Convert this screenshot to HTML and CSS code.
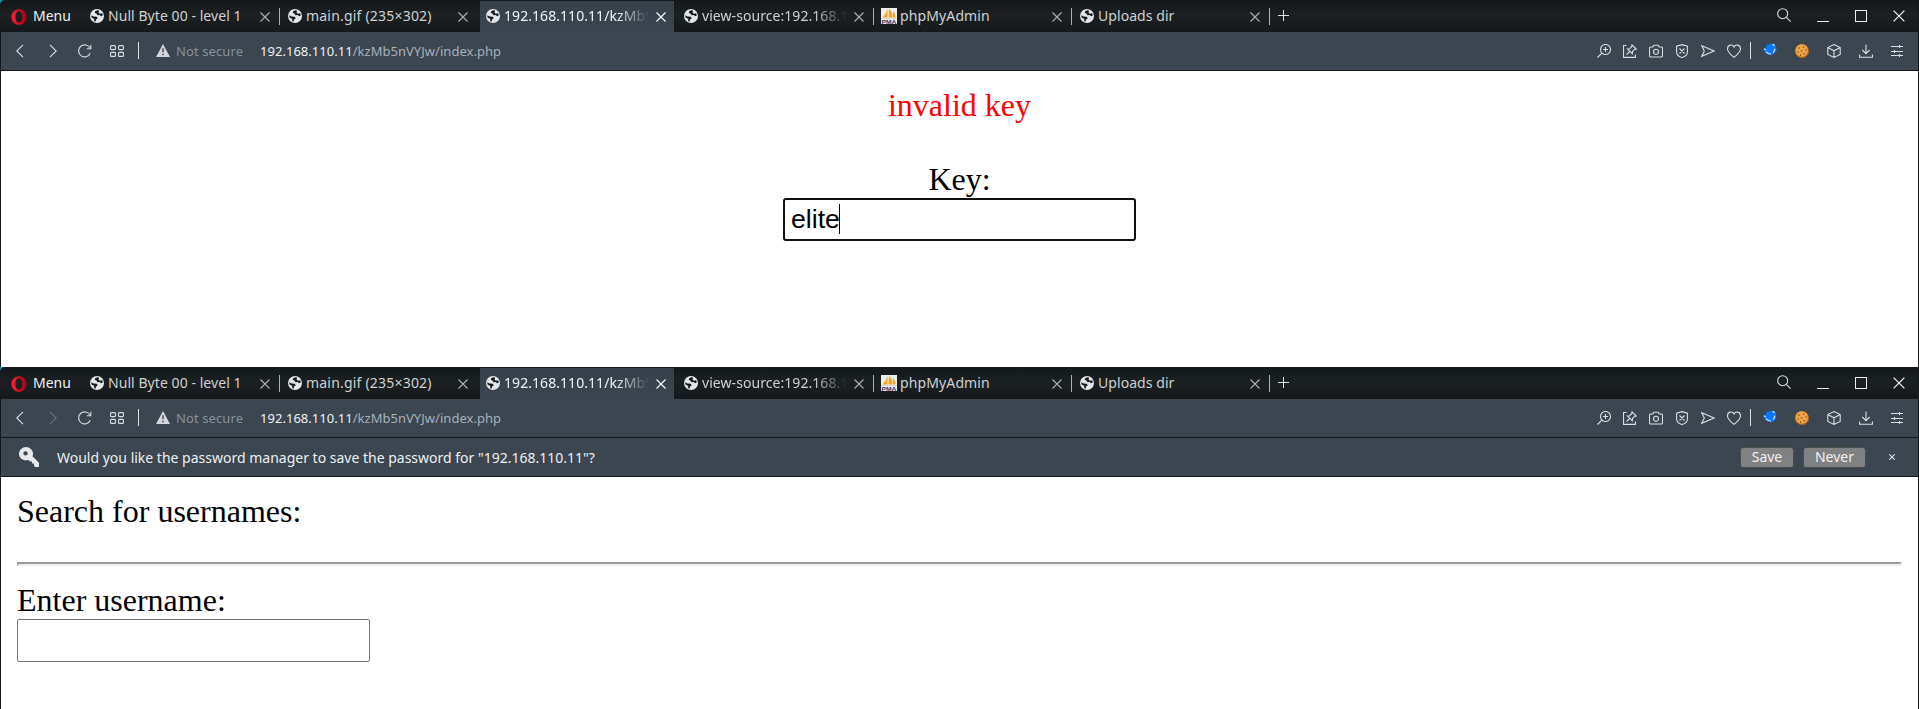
FILE: index.html
```html
<!DOCTYPE html>
<html lang="en">
<head>
<meta charset="utf-8">
<title>index.php</title>
<link rel="stylesheet" href="styles.css">
</head>
<body>
<svg class="defs" width="0" height="0" aria-hidden="true">
  <linearGradient id="red" x1="0" x2="1"><stop offset="0" stop-color="#ff2035"/><stop offset="1" stop-color="#a50012"/></linearGradient>
  <symbol id="opera" viewBox="0 0 16 16"><path fill="url(#red)" fill-rule="evenodd" d="M8 .2C12.3.2 15.6 3.8 15.6 8S12.300 15.800 8 15.800.4 12.200.4 8 3.700.2 8 .2zM8 2.300C5.600 2.300 4.600 5 4.600 8S5.600 13.700 8 13.700 11.400 11 11.400 8 10.400 2.300 8 2.300z"/></symbol>
  <symbol id="globe" viewBox="0 0 14 14"><circle cx="7" cy="7" r="7" fill="#e3e6e9"/><path fill="#15191c" d="M7.400 1.200 5.200 2.200 4.800 3.800 6.600 4.800 7.600 6.300 9.800 6 11 7.300 12.700 6.600 12.300 4.300 9.700 4.700 8.600 3.600 9 1.500zM1.200 6.300 3.500 7.600 6.700 7.800 7.800 9.200 6 10.500 5.700 12.600 4.100 12.200 4.300 10 1.600 8.400z"/></symbol>
  <symbol id="pma" viewBox="0 0 16 16"><path fill="#eee" d="M0 0h16v16H0z"/><path fill="#f8a31c" d="M6.500 1v8.500H1.500Q5 6 6.500 1zM8 1q4 3 3.500 8.500H7.500zM12 3q3 3 2.500 6.500H12z"/><path fill="#d5d5d8" d="M0 10h16v1H0z"/><text x="0.5" y="15.700" font-family="Liberation Sans" font-weight="bold" font-size="6" textLength="15" lengthAdjust="spacingAndGlyphs" fill="#34366f">PMA</text></symbol>
  <symbol id="x" viewBox="0 0 10 10"><path d="M.5.5l9 9M9.500.5l-9 9"/></symbol>
  <symbol id="back" viewBox="0 0 8 14"><path d="M7 .8.8 7 7 13.200"/></symbol>
  <symbol id="fwd" viewBox="0 0 8 14"><path d="M1 .8 7.200 7 1 13.200"/></symbol>
  <symbol id="reload" viewBox="0 0 14 14"><path d="M12.200 9.200A6 6 0 1 1 11.800 3.800M12.800.8V4.800H8.800"/></symbol>
  <symbol id="grid" viewBox="0 0 14 12"><path d="M1.500.6h3a1 1 0 0 1 1 1v2a1 1 0 0 1-1 1h-3a1 1 0 0 1-1-1v-2a1 1 0 0 1 1-1zM9.500.6h3a1 1 0 0 1 1 1v2a1 1 0 0 1-1 1h-3a1 1 0 0 1-1-1v-2a1 1 0 0 1 1-1zM1.500 7.400h3a1 1 0 0 1 1 1v2a1 1 0 0 1-1 1h-3a1 1 0 0 1-1-1v-2a1 1 0 0 1 1-1zM9.500 7.400h3a1 1 0 0 1 1 1v2a1 1 0 0 1-1 1h-3a1 1 0 0 1-1-1v-2a1 1 0 0 1 1-1z"/></symbol>
  <symbol id="warn" viewBox="0 0 14 13"><path fill="#d4d7da" stroke="none" d="M7 0 14 13H0z"/><path stroke="#3b4650" stroke-width="1.400" d="M7 4.200v4M7 9.800v1.500"/></symbol>
  <symbol id="mag" viewBox="0 0 14 14"><circle cx="5.700" cy="5.700" r="5"/><path d="M9.300 9.300l4.300 4.300"/></symbol>
  <symbol id="zoomin" viewBox="0 0 14 14"><circle cx="8.500" cy="5.500" r="5"/><path d="M4.900 9.100.5 13.500M8.500 3v5M6 5.500h5"/></symbol>
  <symbol id="pin" viewBox="0 0 14 14"><path d="M3.500 1.500h-3v11.900h11.900v-3M9 .8l4.200 4.200-1.500.2-2.200 2.300-.2 2.300L4.400 5l2.400-.3 2-2.300zM6.700 7.500 3.500 10.700"/></symbol>
  <symbol id="camera" viewBox="0 0 14 14"><path d="M1.500 3h2.300L4.800 1.200h4.400L10.200 3h2.300a1 1 0 0 1 1 1v8a1 1 0 0 1-1 1h-11a1 1 0 0 1-1-1V4a1 1 0 0 1 1-1z"/><circle cx="7" cy="7.700" r="2.500"/></symbol>
  <symbol id="shield" viewBox="0 0 12 14"><path d="M6 .6 11.400 2.200V8Q11.400 12 6 13.500.6 12 .6 8V2.200zM3.500 4.500l5 5M8.500 4.500l-5 5"/></symbol>
  <symbol id="send" viewBox="0 0 14 12"><path d="M.8.8 13 6 .8 11.200 3.300 6z"/></symbol>
  <symbol id="heart" viewBox="0 0 14 14"><path d="M7 2.900C5.700.2.5.1.5 5c0 3.300 3.400 5.700 6.500 8.400C10.100 10.700 13.500 8.300 13.500 5c0-4.900-5.200-4.800-6.500-2.100z"/></symbol>
  <symbol id="whale" viewBox="0 0 14 14"><path fill="#0877f9" stroke="none" d="M3.500 1.800 9 .8 10.500 1.600 12 .5 11.800 2.500Q14 4 13.300 7.500 12 12 7.500 12 4 12 2 9.500L.3 6.500 2.700 5z"/><path stroke="#d5eaff" d="M.8 5.800 3 6.700M3 8.700q2.500 2.800 5 2.200M10 9.600q1.800-1.500 1.800-3.800M9.500 1.300l2.300 1.500"/></symbol>
  <symbol id="cookie" viewBox="0 0 14 14"><circle cx="7" cy="7" r="7" fill="#bd6b18" stroke="none"/><circle cx="6.700" cy="6.500" r="6.200" fill="#eda64a" stroke="none"/><path stroke="#70400f" stroke-width="1.300" stroke-linecap="round" d="M4 4h.1M8.500 3h.1M11 6h.1M3 8h.1M6.500 7h.1M9 9.500h.1M5.500 11h.1"/></symbol>
  <symbol id="cube" viewBox="0 0 14 14"><path d="M7 .6 13.200 3.600v6.800L7 13.400.8 10.400V3.600zM.8 3.600 7 6.800l6.200-3.200M7 6.800v6.600"/></symbol>
  <symbol id="down" viewBox="0 0 14 14"><path d="M7 .5v9M3.300 6 7 9.700 10.700 6M.6 10.500v2.700h12.800v-2.700"/></symbol>
  <symbol id="sliders" viewBox="0 0 12 12"><path d="M0 1.500h12M0 6.500h12M0 10.500h12M8.500 0v3M3.500 5v3M8.500 9v3"/></symbol>
  <symbol id="key" viewBox="0 0 20 20"><path fill="#e6e9ee" fill-rule="evenodd" stroke="none" d="M7 0C10.700 0 14 3 14 6.700c0 1-.2 1.900-.5 2.600L20 15.800V20h-4l-1-1.500v-2h-2v-2h-2l-1.500-1.600C4.500 14.500 0 11 0 7 0 3 3.300 0 7 0zM6.500 4.200a2.200 2.200 0 1 0 .1 0z"/></symbol>
</svg>

<section class="window first">
  <div class="tabs">
    <div class="menu"><svg class="i16"><use href="#opera"/></svg><span>Menu</span></div>
    <div class="tab sep"><svg class="fav"><use href="#globe"/></svg><span class="t">Null Byte 00 - level 1</span><svg class="close"><use href="#x"/></svg></div>
    <div class="tab"><svg class="fav"><use href="#globe"/></svg><span class="t wide">main.gif (235×302)</span><svg class="close"><use href="#x"/></svg></div>
    <div class="tab active"><svg class="fav"><use href="#globe"/></svg><span class="t fade">192.168.110.11/kzMb5</span><svg class="close"><use href="#x"/></svg></div>
    <div class="tab sep"><svg class="fav"><use href="#globe"/></svg><span class="t fade">view-source:192.168.1</span><svg class="close"><use href="#x"/></svg></div>
    <div class="tab sep pma"><svg class="fav"><use href="#pma"/></svg><span class="t">phpMyAdmin</span><svg class="close"><use href="#x"/></svg></div>
    <div class="tab sep"><svg class="fav"><use href="#globe"/></svg><span class="t">Uploads dir</span><svg class="close"><use href="#x"/></svg></div>
    <i class="plus"></i>
    <div class="controls"><svg class="i14 search"><use href="#mag"/></svg><i class="min"></i><i class="max"></i><svg class="quit"><use href="#x"/></svg></div>
  </div>
  <div class="toolbar">
    <div class="nav"><svg class="arrow"><use href="#back"/></svg><svg class="arrow"><use href="#fwd"/></svg><svg class="i14 reload"><use href="#reload"/></svg><svg class="grid"><use href="#grid"/></svg><i class="bar"></i></div>
    <svg class="warn"><use href="#warn"/></svg><span class="insecure">Not secure</span><span class="url"><b>192.168.110.11</b>/kzMb5nVYJw/index.php</span>
    <div class="tools"><svg class="i14"><use href="#zoomin"/></svg><svg class="i14"><use href="#pin"/></svg><svg class="i14"><use href="#camera"/></svg><svg class="i14"><use href="#shield"/></svg><svg class="i14"><use href="#send"/></svg><svg class="i14"><use href="#heart"/></svg></div><i class="bar"></i>
    <div class="exts"><svg class="i14 whale"><use href="#whale"/></svg><svg class="i14"><use href="#cookie"/></svg><svg class="i14"><use href="#cube"/></svg><svg class="i14"><use href="#down"/></svg><svg class="i12"><use href="#sliders"/></svg></div>
  </div>
  <main class="page centered">
    <p class="invalid">invalid key</p>
    <form><label>Key:</label><div class="field focused"><span>elite</span><i class="caret"></i></div></form>
  </main>
</section>

<section class="window second">
  <div class="tabs">
    <div class="menu"><svg class="i16"><use href="#opera"/></svg><span>Menu</span></div>
    <div class="tab sep"><svg class="fav"><use href="#globe"/></svg><span class="t">Null Byte 00 - level 1</span><svg class="close"><use href="#x"/></svg></div>
    <div class="tab"><svg class="fav"><use href="#globe"/></svg><span class="t wide">main.gif (235×302)</span><svg class="close"><use href="#x"/></svg></div>
    <div class="tab active"><svg class="fav"><use href="#globe"/></svg><span class="t fade">192.168.110.11/kzMb5</span><svg class="close"><use href="#x"/></svg></div>
    <div class="tab sep"><svg class="fav"><use href="#globe"/></svg><span class="t fade">view-source:192.168.1</span><svg class="close"><use href="#x"/></svg></div>
    <div class="tab sep pma"><svg class="fav"><use href="#pma"/></svg><span class="t">phpMyAdmin</span><svg class="close"><use href="#x"/></svg></div>
    <div class="tab sep"><svg class="fav"><use href="#globe"/></svg><span class="t">Uploads dir</span><svg class="close"><use href="#x"/></svg></div>
    <i class="plus"></i>
    <div class="controls"><svg class="i14 search"><use href="#mag"/></svg><i class="min"></i><i class="max"></i><svg class="quit"><use href="#x"/></svg></div>
  </div>
  <div class="toolbar">
    <div class="nav"><svg class="arrow"><use href="#back"/></svg><svg class="arrow disabled"><use href="#fwd"/></svg><svg class="i14 reload"><use href="#reload"/></svg><svg class="grid"><use href="#grid"/></svg><i class="bar"></i></div>
    <svg class="warn"><use href="#warn"/></svg><span class="insecure">Not secure</span><span class="url"><b>192.168.110.11</b>/kzMb5nVYJw/index.php</span>
    <div class="tools"><svg class="i14"><use href="#zoomin"/></svg><svg class="i14"><use href="#pin"/></svg><svg class="i14"><use href="#camera"/></svg><svg class="i14"><use href="#shield"/></svg><svg class="i14"><use href="#send"/></svg><svg class="i14"><use href="#heart"/></svg></div><i class="bar"></i>
    <div class="exts"><svg class="i14 whale"><use href="#whale"/></svg><svg class="i14"><use href="#cookie"/></svg><svg class="i14"><use href="#cube"/></svg><svg class="i14"><use href="#down"/></svg><svg class="i12"><use href="#sliders"/></svg></div>
  </div>
  <div class="infobar"><svg class="key"><use href="#key"/></svg><span class="ask">Would you like the password manager to save the password for "192.168.110.11"?</span><button class="save">Save</button><button class="never">Never</button><svg class="dismiss"><use href="#x"/></svg></div>
  <main class="page">
    <p class="heading">Search for usernames:</p>
    <hr>
    <form><label>Enter username:</label><div class="field"></div></form>
  </main>
</section>
</body>
</html>
```
FILE: styles.css
```css
* { box-sizing: border-box; }
body { margin: 0; width: 1919px; height: 709px; overflow: hidden; background: #fff; font-family: "Noto Sans", sans-serif; }
svg { display: block; flex: none; fill: none; stroke: #d9dee2; stroke-width: 1.1; }
.defs { position: absolute; }
i { display: block; flex: none; }
.window { border: solid #14171c; border-width: 0 1px; background: #fff; position: relative; }
.window::before { content: ""; position: absolute; left: -1px; top: 0; width: 4px; height: 4px; background: #1a8fa3; }
.first { height: 367px; }
.second { height: 342px; }
.tabs { height: 32px; margin-left: -1px; position: relative; display: flex; align-items: center; background: linear-gradient(#14181b, #1b2023 45%, #15191c); color: #cfd1d2; font-size: 14px; line-height: 20px; border-top-left-radius: 5px; }
.menu { width: 84px; padding: 1px 0 0 11px; display: flex; align-items: center; gap: 6px; color: #eef0f1; }
.menu span { margin-top: -1px; }
.i16 { width: 16px; height: 16px; stroke: none; }
.i14 { width: 14px; height: 14px; }
.i12 { width: 12px; height: 12px; }
.tab { width: 194px; height: 32px; margin-right: 4px; padding: 0 8.5px 0 6px; display: flex; align-items: center; position: relative; }
.tab .t { width: 144px; margin-left: 4px; white-space: nowrap; letter-spacing: .06px; }
.tab .wide { letter-spacing: .2px; }
.fav { width: 14px; height: 14px; stroke: none; }
.pma { padding-left: 5px; }
.pma .fav { width: 16px; height: 16px; }
.pma .t { margin-left: 3px; letter-spacing: .12px; }
.close { width: 10px; height: 10px; margin: 1px 0 0 auto; stroke: #aeb1b3; }
.active { background: linear-gradient(#35404a, #3b4650) 0 1px no-repeat; color: #f2f4f5; }
.active .close { stroke: #fff; }
.fade { -webkit-mask-image: linear-gradient(90deg, #000 78%, transparent 101%); mask-image: linear-gradient(90deg, #000 78%, transparent 101%); }
.sep::after { content: ""; position: absolute; left: 195px; top: 8px; width: 1px; height: 17px; background: #a9b2b9; }
.plus { width: 11px; height: 11px; margin: -1px 0 0 6px; background: linear-gradient(#dde, #dde) 5px 0 / 1px 11px no-repeat, linear-gradient(#dde, #dde) 0 5px / 11px 1px no-repeat; }
.controls { margin-left: auto; padding-right: 13px; display: flex; align-items: center; stroke: #fff; }
.search { margin: -2px 26px 0 0; }
.min { width: 12px; height: 1px; margin: 11px 26px 0 0; background: #eee; }
.max { width: 12px; height: 12px; margin-right: 26px; border: 1px solid #eee; }
.quit { width: 12px; height: 12px; stroke: #eee; }
.toolbar { height: 39px; padding: 0 15px 1px; border-bottom: 1px solid #14171c; background: #3b4650; display: flex; align-items: center; }
.nav { display: flex; align-items: center; }
.arrow { width: 8px; height: 14px; margin-right: 25px; }
.disabled { opacity: .3; }
.reload { margin: 0 18px 0 -4px; }
.grid { width: 14px; height: 12px; margin-right: 14px; }
.bar { width: 1px; height: 17px; background: #dde1e4; }
.warn { width: 14px; height: 13px; margin-left: 17px; }
.insecure { width: 84px; margin-left: 6px; color: #87929b; font-size: 13px; white-space: nowrap; letter-spacing: .1px; }
.url { color: #a7b1ba; font-size: 13px; white-space: nowrap; letter-spacing: .03px; }
.url b { font-weight: normal; color: #eff2f4; }
.tools { display: flex; align-items: center; gap: 12px; margin: 0 9px 0 auto; }
.exts { display: flex; align-items: center; gap: 18px; margin-left: 12px; }
.whale { margin-top: -2px; }
.infobar { height: 39px; border-bottom: 1px solid #14171c; background: #3b4650; color: #eef1f3; display: flex; align-items: center; padding: 0 23px 0 18px; font-size: 14px; }
.key { width: 20px; height: 20px; }
.ask { margin: 0 auto 0 18px; white-space: nowrap; }
.infobar button { height: 21px; padding: 0; margin: 0 9px 0 0; border: 1px solid #4b4c4e; border-radius: 3px; background: #808183; color: #f1f1f1; font: 14px/18px "Noto Sans", sans-serif; }
.save { width: 54px; }
.never { width: 63px; }
.dismiss { width: 6px; height: 6px; margin-left: 14px; stroke-width: 2; }
.page { padding: 16px; font: 32px/37px "Liberation Serif", serif; color: #000; }
.page p { margin: 0; }
.centered { text-align: center; }
.centered .invalid { color: #f00; margin-bottom: 37px; }
.page label { display: block; }
.page hr { margin: 32px 0 16px; height: 4px; border: 2px solid; border-color: #9a9a9a #eee #eee #9a9a9a; }
.field { width: 353px; height: 43px; border: 1px solid #767676; border-radius: 2px; display: flex; align-items: center; font: 26.667px/30px "Liberation Sans", sans-serif; }
.focused { margin: 0 auto; border: 2px solid #101010; border-radius: 3px; padding: 0 0 2px 6px; }
.caret { width: 1px; height: 30px; margin: 1px 0 0 -1px; background: #000; }
```
